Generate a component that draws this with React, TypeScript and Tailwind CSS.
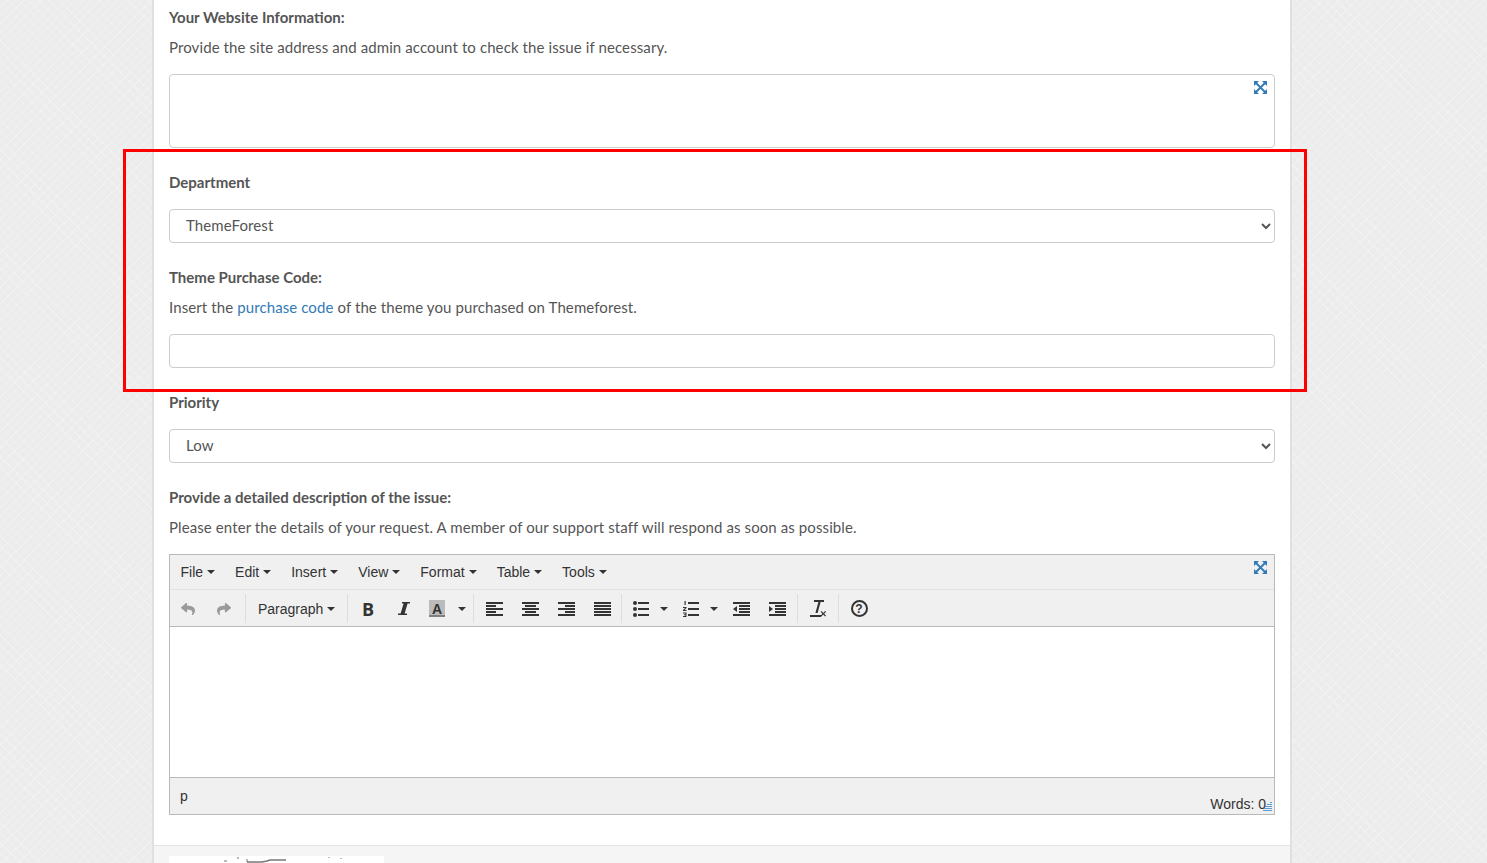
import { FaReply, FaShare } from 'react-icons/fa';

const menuItems = ['File', 'Edit', 'Insert', 'View', 'Format', 'Table', 'Tools'];

function Caret({ className = '' }: { className?: string }) {
  return <span className={`inline-block h-0 w-0 border-x-4 border-t-4 border-x-transparent border-t-[#333] ${className}`} />;
}

function Separator() {
  return <div className="h-[29px] w-px bg-[#dddddd]" />;
}

function ExpandIcon() {
  return (
    <svg width="13" height="13" viewBox="0 0 13 13" fill="#337ab7" stroke="none">
      <path d="M0 0h5L0 5zM13 0v5L8 0zM0 13V8l5 5zM13 13H8l5-5z" />
      <path d="M2 2l9 9M11 2l-9 9" stroke="#337ab7" strokeWidth="1.8" />
    </svg>
  );
}

// alignment icons are just stacks of bars
function AlignIcon({ rows }: { rows: [number, number][] }) {
  return (
    <svg width="17" height="14" viewBox="0 0 17 14" fill="#333">
      {rows.map(([x, w], i) => (
        <rect key={i} x={x} y={i * 3} width={w} height="2" />
      ))}
    </svg>
  );
}

function IndentIcon({ arrow }: { arrow: string }) {
  return (
    <svg width="17" height="14" viewBox="0 0 17 14" fill="#333">
      <rect x="0" y="0" width="17" height="2" />
      <rect x="6" y="3" width="11" height="2" />
      <rect x="6" y="6" width="11" height="2" />
      <rect x="6" y="9" width="11" height="2" />
      <rect x="0" y="12" width="17" height="2" />
      <path d={arrow} />
    </svg>
  );
}

function ToolBtn({ children, className = 'w-9' }: { children: React.ReactNode; className?: string }) {
  return <div className={`flex h-[36px] items-center justify-center ${className}`}>{children}</div>;
}

function Label({ children }: { children: React.ReactNode }) {
  return <div className="h-5 text-[15px] leading-5 font-bold text-[#555555]">{children}</div>;
}

function Help({ children }: { children: React.ReactNode }) {
  return <p className="mt-[10px] h-5 text-[15px] leading-5 tracking-[0.1px] text-[#555555]">{children}</p>;
}

function FormSelect({ value }: { value: string }) {
  return (
    <select
      defaultValue={value}
      className="mt-[17px] block h-[34px] w-full rounded border border-[#cccccc] bg-white pb-[2px] pl-3 text-[15px] tracking-[0.1px] text-[#555555]"
    >
      <option>{value}</option>
    </select>
  );
}

export default function App() {
  return (
    <div
      className="relative h-[863px] overflow-hidden bg-[#ececec] font-['Lato',sans-serif]"
      style={{
        backgroundImage:
          'repeating-linear-gradient(45deg, rgba(255,255,255,0.22) 0 1px, transparent 1px 7px), repeating-linear-gradient(-45deg, rgba(255,255,255,0.22) 0 1px, transparent 1px 6px)',
      }}
    >
      <div className="ml-[152px] flex h-full w-[1140px] flex-col border-x-2 border-[#e0e0e0] bg-white">
        <div className="h-[845px] shrink-0 px-[15px] pt-[7px]">
          <Label>Your Website Information:</Label>
          <Help>Provide the site address and admin account to check the issue if necessary.</Help>
          <div className="mt-[17px] flex h-[74px] justify-end rounded border border-[#cccccc] p-[7px] pt-[6px]">
            <div>
              <ExpandIcon />
            </div>
          </div>

          <div className="mt-6">
            <Label>Department</Label>
            <FormSelect value="ThemeForest" />
          </div>

          <div className="mt-6">
            <Label>Theme Purchase Code:</Label>
            <Help>
              Insert the <a className="text-[#337ab7]">purchase code</a> of the theme you purchased on Themeforest.
            </Help>
            <input className="mt-[17px] block h-[34px] w-full rounded border border-[#cccccc] bg-white px-3" />
          </div>

          <div className="mt-6">
            <Label>Priority</Label>
            <FormSelect value="Low" />
          </div>

          <div className="mt-6">
            <Label>Provide a detailed description of the issue:</Label>
            <Help>Please enter the details of your request. A member of our support staff will respond as soon as possible.</Help>
          </div>

          <div className="relative mt-[17px] border border-[#b9b9b9] font-['Liberation_Sans',sans-serif] text-sm text-[#333333]">
            <div className="absolute top-[6px] right-[7px]">
              <ExpandIcon />
            </div>

            <div className="flex h-[35px] items-center gap-5 border-b border-[#e2e2e2] bg-[#f0f0f0] pl-[10.5px]">
              {menuItems.map((item) => (
                <span key={item} className="flex items-center gap-1">
                  {item}
                  <Caret />
                </span>
              ))}
            </div>

            <div className="flex h-[37px] items-center border-b border-[#b9b9b9] bg-[#f0f0f0] pt-px">
              <ToolBtn><FaReply size={14} color="#9a9a9a" /></ToolBtn>
              <ToolBtn><FaShare size={14} color="#9a9a9a" /></ToolBtn>
              <div className="w-[3px]" />
              <Separator />
              <div className="flex w-[101px] items-center gap-1 pl-3">
                Paragraph
                <Caret />
              </div>
              <Separator />
              <ToolBtn className="ml-[2px] w-9">
                <span className="font-['Open_Sans',sans-serif] text-[18px] leading-none font-bold">B</span>
              </ToolBtn>
              <ToolBtn>
                <svg width="12" height="13" viewBox="0 0 12 13" fill="#333">
                  <path d="M4 0h8v1.5H9.6L6.6 11.5H9V13H0v-1.5h2.6L5.6 1.5H4z" />
                </svg>
              </ToolBtn>
              <ToolBtn className="w-[30px] justify-start pl-[7px]">
                <span className="flex h-[17px] w-4 items-center justify-center border-b-2 border-[#808080] bg-[#bbbbbb] pt-[2px] text-[14px] leading-none font-bold">A</span>
              </ToolBtn>
              <ToolBtn className="w-[20px]"><Caret /></ToolBtn>
              <div className="w-px" />
              <Separator />
              <ToolBtn className="ml-[2px] w-9"><AlignIcon rows={[[0, 17], [0, 10], [0, 17], [0, 10], [0, 17]]} /></ToolBtn>
              <ToolBtn><AlignIcon rows={[[0, 17], [3, 11], [0, 17], [3, 11], [0, 17]]} /></ToolBtn>
              <ToolBtn><AlignIcon rows={[[0, 17], [7, 10], [0, 17], [7, 10], [0, 17]]} /></ToolBtn>
              <ToolBtn><AlignIcon rows={[[0, 17], [0, 17], [0, 17], [0, 17], [0, 17]]} /></ToolBtn>
              <div className="w-px" />
              <Separator />
              <ToolBtn className="ml-px w-9">
                <svg width="16" height="16" viewBox="0 0 16 16" fill="#333">
                  <circle cx="2" cy="2" r="2" />
                  <circle cx="2" cy="8" r="2" />
                  <circle cx="2" cy="14" r="2" />
                  <rect x="5" y="1" width="11" height="2" />
                  <rect x="5" y="7" width="11" height="2" />
                  <rect x="5" y="13" width="11" height="2" />
                </svg>
              </ToolBtn>
              <ToolBtn className="w-[10px]"><Caret /></ToolBtn>
              <ToolBtn className="ml-1 w-9">
                <svg width="16" height="16" viewBox="0 0 16 16" fill="#333">
                  <rect x="1.5" y="0" width="1.2" height="4" />
                  <path d="M0 6h3.5v1L1.5 9h2v1H0V9l2-2H0zM0 11.5h3.5V16H0v-1h2.5v-.8H1v-1h1.5v-.7H0z" />
                  <rect x="5" y="1" width="11" height="2" />
                  <rect x="5" y="7" width="11" height="2" />
                  <rect x="5" y="13" width="11" height="2" />
                </svg>
              </ToolBtn>
              <ToolBtn className="w-[10px]"><Caret /></ToolBtn>
              <ToolBtn className="ml-1 w-9"><IndentIcon arrow="M0 7l4-3v6z" /></ToolBtn>
              <ToolBtn><IndentIcon arrow="M4 7L0 4v6z" /></ToolBtn>
              <div className="w-[2px]" />
              <Separator />
              <ToolBtn className="w-10">
                <svg width="17" height="17" viewBox="0 0 17 17" fill="#333">
                  <path d="M4 0h10v2h-3.4L7.6 13H5.4L8.4 2H4z" />
                  <rect x="0" y="15" width="11" height="2" />
                  <path d="M11.5 11l1.8 1.9L15.1 11l.9.8-1.8 2 1.8 1.9-.9.8-1.8-1.9-1.8 1.9-.9-.8 1.8-1.9-1.8-2z" />
                </svg>
              </ToolBtn>
              <Separator />
              <ToolBtn className="w-10">
                <span className="flex h-[17px] w-[17px] items-center justify-center rounded-full border-2 border-[#333] text-[12px] leading-none font-bold">?</span>
              </ToolBtn>
            </div>

            <div className="h-[150px] bg-white" />

            <div className="relative flex h-[37px] border-t border-[#b9b9b9] bg-[#f0f0f0] pl-[10px]">
              <span className="pt-[10px] leading-4">p</span>
              <span className="absolute right-2 bottom-[2px] text-[14px] leading-4">Words: 0</span>
              <svg width="9" height="9" viewBox="0 0 9 9" className="absolute right-[2px] bottom-[3px]" fill="#5b9bd5">
                <rect x="7" y="0" width="2" height="1" />
                <rect x="4" y="2" width="5" height="1" />
                <rect x="2" y="4" width="7" height="1" />
                <rect x="1" y="6" width="8" height="1" />
                <rect x="0" y="8" width="9" height="1" />
              </svg>
            </div>
          </div>
        </div>

        <div className="flex-1 border-t border-[#e3e3e3] bg-[#f5f5f5] px-[15px] pt-[10px]">
          <div className="h-[30px] w-[215px] bg-white">
            <svg width="215" height="8" viewBox="0 0 215 8" fill="none" stroke="#777777">
              <path d="M78 6h15l5-1 3-1h16" strokeWidth="1.5" />
              <path d="M55 5h3M69 1v2M78 3v3M160 1v1M172 2v1" strokeWidth="1" />
            </svg>
          </div>
        </div>
      </div>

      <div className="pointer-events-none absolute top-[149px] left-[123px] h-[243px] w-[1184px] border-[3px] border-[#ff0000]" />
    </div>
  );
}
